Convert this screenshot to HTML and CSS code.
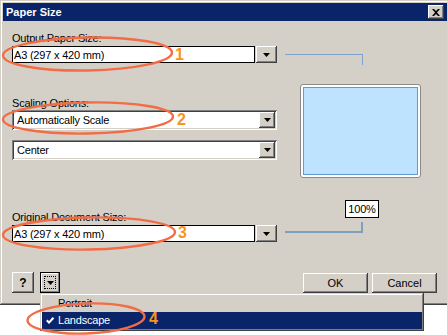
FILE: index.html
```html
<!DOCTYPE html>
<html lang="en">

<head>
    <meta charset="UTF-8">
    <meta name="viewport" content="width=device-width, initial-scale=1.0">
    <title>Paper Size</title>

    <link rel="stylesheet" href="styles.css">
</head>

<body>
    <div class="window">
        <div class="titlebar">
            <span class="title">Paper Size</span>
            <button class="btn close-btn" type="button">
                <svg width="8" height="7" viewBox="0 0 8 7"><path d="M0 0h2l2 2 2-2h2L5 3.5 8 7H6L4 5 2 7H0l3-3.5z" fill="#000"/></svg>
            </button>
        </div>

        <div class="content">
            <div class="fields">
                <div class="label first-label">Output Paper Size:</div>
                <div class="combo flat">
                    <div class="field">A3 (297 x 420 mm)</div>
                    <span class="btn drop-btn"><svg width="7" height="4" viewBox="0 0 7 4"><path d="M0 0h7L3.5 4z"/></svg></span>
                    <span class="num num-1">1</span>
                </div>

                <div class="label scaling-label">Scaling Options:</div>
                <div class="combo sunken">
                    <div class="field">Automatically Scale</div>
                    <span class="btn drop-btn"><svg width="7" height="4" viewBox="0 0 7 4"><path d="M0 0h7L3.5 4z"/></svg></span>
                    <span class="num num-2">2</span>
                </div>
                <div class="combo sunken center-combo">
                    <div class="field">Center</div>
                    <span class="btn drop-btn"><svg width="7" height="4" viewBox="0 0 7 4"><path d="M0 0h7L3.5 4z"/></svg></span>
                </div>

                <div class="label original-label">Original Document Size:</div>
                <div class="combo flat">
                    <div class="field">A3 (297 x 420 mm)</div>
                    <span class="btn drop-btn"><svg width="7" height="4" viewBox="0 0 7 4"><path d="M0 0h7L3.5 4z"/></svg></span>
                    <span class="num num-3">3</span>
                </div>
            </div>

            <div class="preview-col">
                <div class="connector connector-top"></div>
                <div class="preview">
                    <div class="paper"></div>
                </div>
                <div class="percent">100%</div>
                <div class="connector connector-bottom"></div>
            </div>
        </div>

        <div class="footer">
            <div class="footer-left">
                <button class="btn help-btn" type="button">?</button>
                <button class="btn orient-btn" type="button">
                    <span class="focus-rect"><svg width="7" height="4" viewBox="0 0 7 4"><path d="M0 0h7L3.5 4z"/></svg></span>
                </button>
            </div>
            <div class="footer-right">
                <button class="btn push-btn" type="button">OK</button>
                <button class="btn push-btn" type="button">Cancel</button>
            </div>
        </div>
    </div>

    <ul class="menu">
        <li class="menu-item">Portrait</li>
        <li class="menu-item selected">
            <svg class="check" width="8" height="7" viewBox="0 0 8 7"><path d="M0.8 3.2l2.2 2.4 4.4-4.8" fill="none" stroke="#fff" stroke-width="2"/></svg>
            Landscape
            <span class="num num-4">4</span>
        </li>
    </ul>

    <!-- callout rings drawn over the dialog -->
    <svg class="rings" width="447" height="335" viewBox="0 0 447 335">
        <g fill="none" stroke="#f26c45" stroke-width="2.4">
            <ellipse cx="87.5" cy="54" rx="84.5" ry="16.5" transform="rotate(-1 87.5 54)"/>
            <ellipse cx="88" cy="118" rx="85" ry="15.5" transform="rotate(-1 88 118)"/>
            <ellipse cx="89" cy="233.5" rx="86" ry="16" transform="rotate(-1 89 233.5)"/>
            <ellipse cx="86" cy="318.5" rx="58.5" ry="15" transform="rotate(-2 86 318.5)"/>
        </g>
    </svg>
</body>

</html>
```

FILE: styles.css
```css
* {
    padding: 0;
    margin: 0;
    box-sizing: border-box;
}

html,
body {
    width: 447px;
    height: 335px;
    overflow: hidden;
    background: #fff;
}

body {
    font-family: "Liberation Sans", Arial, sans-serif;
    font-size: 11px;
    letter-spacing: -0.2px;
    color: #000;
    position: relative;
}

.window {
    width: 450px;
    height: 305px;
    padding: 3px;
    background: #d4d0c8;
    box-shadow: inset -1px -1px #404040, inset 1px 1px #d4d0c8, inset -2px -2px #808080, inset 2px 2px #fff;
    display: flex;
    flex-direction: column;
}

.titlebar {
    height: 18px;
    background: #0a246a;
    display: flex;
    align-items: center;
    justify-content: space-between;
    padding: 0 3px 0 3px;
}

.title {
    color: #fff;
    font-weight: bold;
    letter-spacing: 0;
}

.btn {
    background: #d4d0c8;
    border: none;
    font: inherit;
    color: #000;
    box-shadow: inset -1px -1px #404040, inset 1px 1px #fff, inset -2px -2px #808080, inset 2px 2px #d4d0c8;
    display: flex;
    align-items: center;
    justify-content: center;
}

.close-btn {
    width: 16px;
    height: 14px;
}

.content {
    display: flex;
    column-gap: 8px;
    padding-left: 9px;
}

.fields {
    width: 265px;
    padding-top: 11px;
}

.label {
    height: 13px;
    line-height: 13px;
    margin-bottom: 1px;
}

.scaling-label {
    margin-top: 34px;
    margin-bottom: 0;
}

.original-label {
    margin-top: 51px;
}

.combo {
    position: relative;
    display: flex;
}

.field {
    flex: 1;
    background: #fff;
    display: flex;
    align-items: center;
    white-space: nowrap;
}

.combo.flat {
    height: 17px;
    column-gap: 1px;
}

.combo.flat .field {
    border: 1px solid #000;
    padding-left: 1px;
}

.combo.flat .drop-btn {
    width: 21px;
}

.combo.sunken {
    height: 20px;
    padding: 2px;
    background: #fff;
    box-shadow: inset 1px 1px #808080, inset -1px -1px #fff, inset 2px 2px #404040, inset -2px -2px #d4d0c8;
}

.combo.sunken .field {
    padding-left: 3px;
}

.combo.sunken .drop-btn {
    width: 16px;
}

.center-combo {
    margin-top: 10px;
}

.num {
    position: absolute;
    font-size: 16px;
    line-height: 16px;
    font-weight: bold;
    color: #f7941e;
    letter-spacing: 0;
}

.num-1 {
    left: 163px;
    top: 1px;
}

.num-2 {
    left: 165px;
    top: 2px;
}

.num-3 {
    left: 166px;
    top: 0;
}

.num-4 {
    left: 107px;
    top: -1px;
}

.preview-col {
    width: 136px;
}

.connector {
    width: 78px;
    height: 11px;
}

.connector-top {
    margin-top: 33px;
    border-top: 1px solid #7ba3cf;
    border-right: 1px solid #7ba3cf;
}

.preview {
    margin: 19px 0 0 15px;
    width: 121px;
    height: 94px;
    padding: 2px;
    background: #fff;
    border: 1px solid #8a8a8a;
    border-radius: 3px;
}

.paper {
    height: 100%;
    background: #bee3fe;
    border: 1px solid #5f9bd6;
}

.percent {
    margin: 22px 0 0 60px;
    width: 34px;
    height: 18px;
    background: #fff;
    border: 1px solid #000;
    text-align: center;
    line-height: 16px;
}

.connector-bottom {
    margin-top: 4px;
    border-bottom: 2px solid #7f9fc1;
    border-right: 2px solid #7f9fc1;
}

.footer {
    margin-top: auto;
    padding: 0 10px 9px 9px;
    display: flex;
    align-items: flex-end;
    justify-content: space-between;
}

.footer-left {
    display: flex;
    column-gap: 6px;
}

.help-btn {
    width: 22px;
    height: 21px;
    font-weight: bold;
    font-size: 12px;
}

.orient-btn {
    width: 20px;
    height: 21px;
    box-shadow: inset 0 0 0 1px #000, inset -2px -2px #808080, inset 2px 2px #fff;
}

.focus-rect {
    width: 12px;
    height: 13px;
    border: 1px dotted #000;
    display: flex;
    align-items: center;
    justify-content: center;
}

.footer-right {
    display: flex;
    column-gap: 4px;
}

.push-btn {
    width: 65px;
    height: 20px;
}

.menu {
    position: absolute;
    left: 40px;
    top: 293px;
    width: 384px;
    height: 38px;
    padding: 2px;
    list-style: none;
    background: #d4d0c8;
    box-shadow: inset -1px -1px #404040, inset 1px 1px #d4d0c8, inset -2px -2px #808080, inset 2px 2px #fff;
}

.menu-item {
    position: relative;
    height: 17px;
    line-height: 17px;
    padding-left: 16px;
}

.menu-item.selected {
    background: #0a246a;
    color: #fff;
}

.check {
    position: absolute;
    left: 4px;
    top: 5px;
}

.rings {
    position: absolute;
    left: 0;
    top: 0;
    pointer-events: none;
}
```
